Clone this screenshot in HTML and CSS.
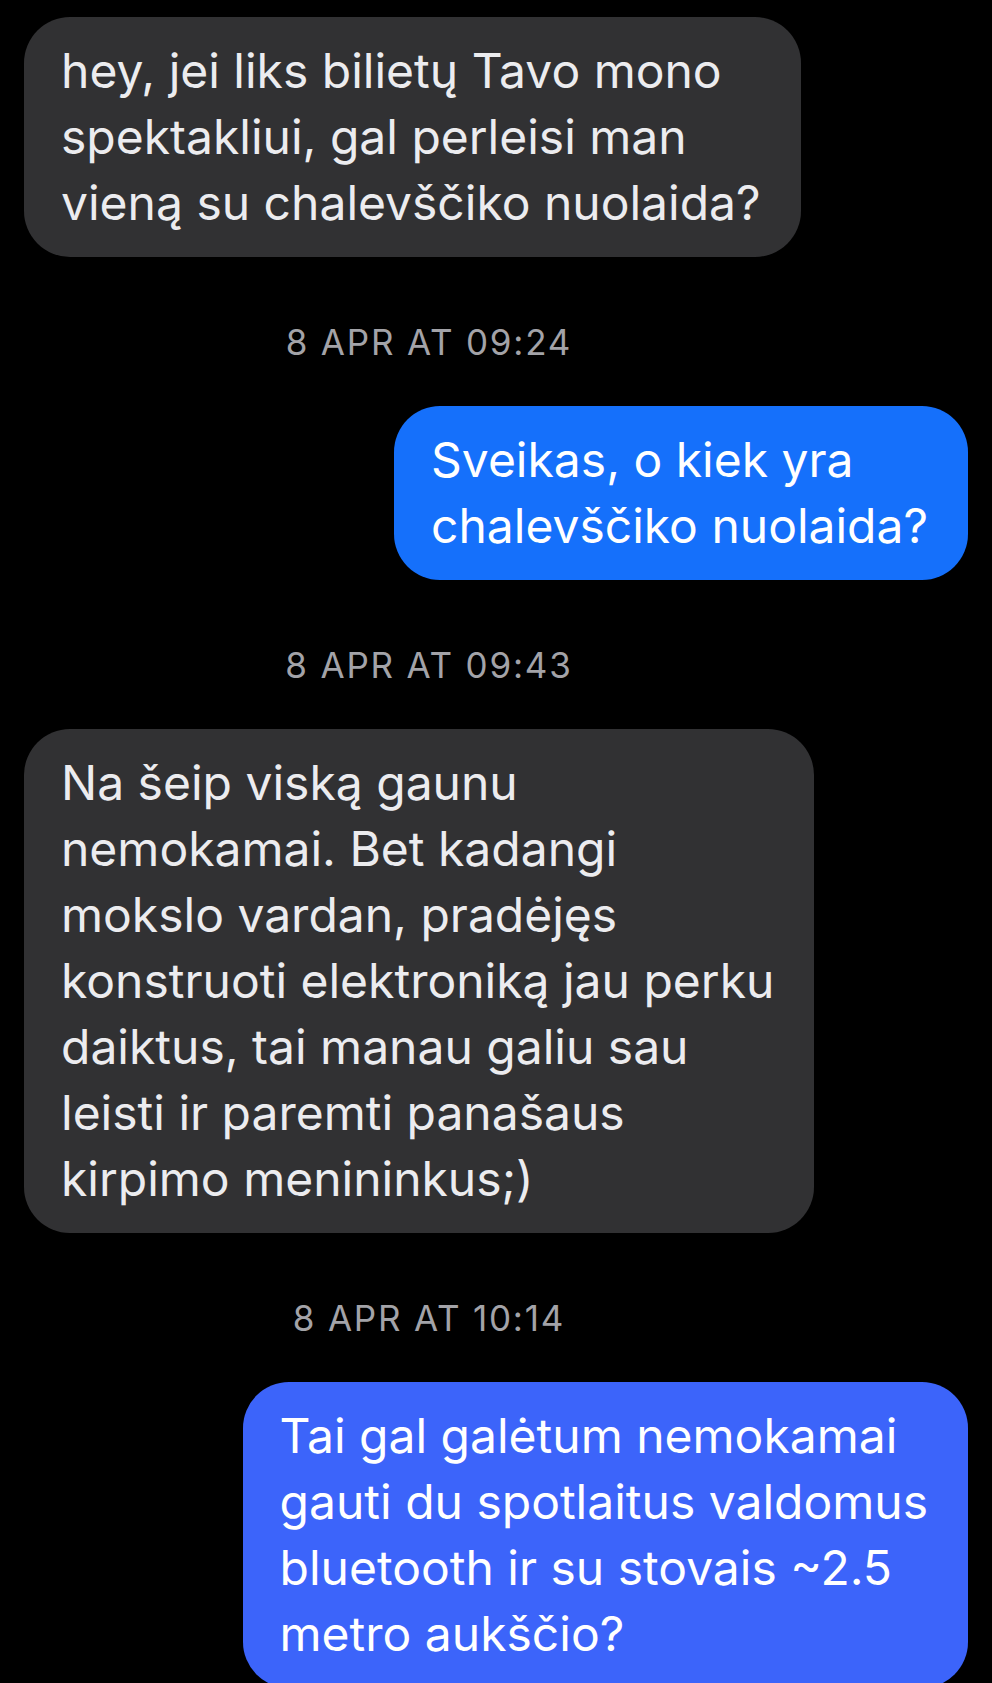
FILE: index.html
```html
<!DOCTYPE html>
<html lang="lt">
<head>
	<meta charset="UTF-8">
	<title>Žinutės</title>
	<link rel="stylesheet" href="styles.css">
</head>
<body>
	<div class="thread">
		<div class="msg msg-in">hey, jei liks bilietų Tavo mono<br>spektakliui, gal perleisi man<br>vieną su chalevščiko nuolaida?</div>

		<div class="stamp">8 APR AT 09:24</div>
		<div class="msg msg-out">Sveikas, o kiek yra<br>chalevščiko nuolaida?</div>

		<div class="stamp">8 APR AT 09:43</div>
		<div class="msg msg-in">Na šeip viską gaunu<br>nemokamai. Bet kadangi<br>mokslo vardan, pradėjęs<br>konstruoti elektroniką jau perku<br>daiktus, tai manau galiu sau<br>leisti ir paremti panašaus<br>kirpimo menininkus;)</div>

		<div class="stamp">8 APR AT 10:14</div>
		<div class="msg msg-out msg-late">Tai gal galėtum nemokamai<br>gauti du spotlaitus valdomus<br>bluetooth ir su stovais ~2.5<br>metro aukščio?</div>
	</div>
</body>
</html>
```

FILE: styles.css
```css
*{margin:0;padding:0;box-sizing:border-box;}
html,body{background:#000;}
body{font-family:Inter,"Noto Sans",sans-serif;padding:17px 24px 0;overflow:hidden;height:1683px;}

.thread{display:flex;flex-direction:column;align-items:flex-start;}

.msg{font-size:48px;line-height:66px;padding:21px 40px 21px 37px;border-radius:46px;white-space:nowrap;}
.msg-in{background:#313133;color:#ececef;}
.msg-out{align-self:flex-end;background:#1570fb;color:#fff;}
.msg-late{background:#3c64fa;}

.stamp{font-size:35px;line-height:40px;letter-spacing:1.8px;color:#a3a3a8;margin:65px 0 44px;padding-right:134px;align-self:stretch;text-align:center;}
```
